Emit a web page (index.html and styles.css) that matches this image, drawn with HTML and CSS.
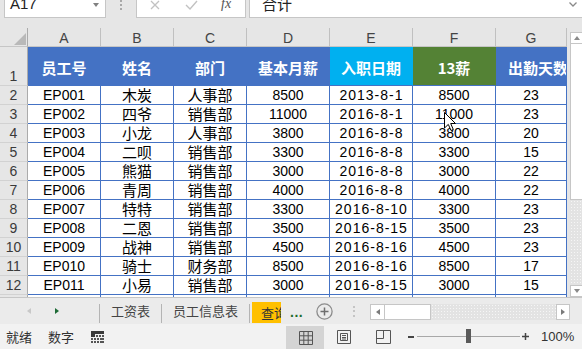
FILE: index.html
```html
<!DOCTYPE html>
<html lang="zh-CN">
<head>
<meta charset="utf-8">
<title>工资表</title>
<link rel="stylesheet" href="styles.css">
</head>
<body>
<div class="app">
  <div class="formula-bar">
    <div class="fb-box name-box"><span class="name-text">A17</span><span class="dd"></span></div>
    <div class="grip"></div>
    <div class="fb-box fx-box">
      <svg class="ic-x" width="10" height="10" viewBox="0 0 10 10"><path d="M1 1 L9 9 M9 1 L1 9" stroke="#c2c2c2" stroke-width="1.3" fill="none"/></svg>
      <svg class="ic-check" width="13" height="10" viewBox="0 0 13 10"><path d="M1 5 L5 9 L12 1" stroke="#c2c2c2" stroke-width="1.4" fill="none"/></svg>
      <span class="fx">fx</span>
    </div>
    <div class="fb-box formula-input"><span class="f-text">合计</span>
      <svg class="chev" width="8" height="5" viewBox="0 0 8 5"><path d="M0.5 0.5 L4 4 L7.5 0.5" stroke="#8a8a8a" stroke-width="1.3" fill="none"/></svg>
    </div>
  </div>

  <div class="sheet-wrap">
    <div class="sheet">
      <div class="corner"><span class="tri"></span></div>
      <div class="ch">A</div><div class="ch">B</div><div class="ch">C</div><div class="ch">D</div><div class="ch">E</div><div class="ch">F</div><div class="ch">G</div>

      <div class="rh rh1">1</div>
      <div class="hd">员工号</div><div class="hd">姓名</div><div class="hd">部门</div><div class="hd">基本月薪</div><div class="hd hd-cyan">入职日期</div><div class="hd hd-green">13薪</div><div class="hd hd-last">出勤天数</div>

      <div class="rh">2</div><div class="c">EP001</div><div class="c zh">木炭</div><div class="c zh">人事部</div><div class="c">8500</div><div class="c dt">2013-8-1</div><div class="c">8500</div><div class="c">23</div>
      <div class="rh">3</div><div class="c">EP002</div><div class="c zh">四爷</div><div class="c zh">销售部</div><div class="c">11000</div><div class="c dt">2016-8-1</div><div class="c">11000</div><div class="c">23</div>
      <div class="rh">4</div><div class="c">EP003</div><div class="c zh">小龙</div><div class="c zh">人事部</div><div class="c">3800</div><div class="c dt">2016-8-8</div><div class="c">3800</div><div class="c">20</div>
      <div class="rh">5</div><div class="c">EP004</div><div class="c zh">二呗</div><div class="c zh">销售部</div><div class="c">3300</div><div class="c dt">2016-8-8</div><div class="c">3300</div><div class="c">15</div>
      <div class="rh">6</div><div class="c">EP005</div><div class="c zh">熊猫</div><div class="c zh">销售部</div><div class="c">3000</div><div class="c dt">2016-8-8</div><div class="c">3000</div><div class="c">22</div>
      <div class="rh">7</div><div class="c">EP006</div><div class="c zh">青周</div><div class="c zh">销售部</div><div class="c">4000</div><div class="c dt">2016-8-8</div><div class="c">4000</div><div class="c">22</div>
      <div class="rh">8</div><div class="c">EP007</div><div class="c zh">特特</div><div class="c zh">销售部</div><div class="c">3300</div><div class="c dt">2016-8-10</div><div class="c">3300</div><div class="c">23</div>
      <div class="rh">9</div><div class="c">EP008</div><div class="c zh">二恩</div><div class="c zh">销售部</div><div class="c">3500</div><div class="c dt">2016-8-15</div><div class="c">3500</div><div class="c">23</div>
      <div class="rh">10</div><div class="c">EP009</div><div class="c zh">战神</div><div class="c zh">销售部</div><div class="c">4500</div><div class="c dt">2016-8-16</div><div class="c">4500</div><div class="c">23</div>
      <div class="rh">11</div><div class="c">EP010</div><div class="c zh">骑士</div><div class="c zh">财务部</div><div class="c">8500</div><div class="c dt">2016-8-16</div><div class="c">8500</div><div class="c">17</div>
      <div class="rh">12</div><div class="c">EP011</div><div class="c zh">小易</div><div class="c zh">销售部</div><div class="c">3000</div><div class="c dt">2016-8-15</div><div class="c">3000</div><div class="c">15</div>
      <div class="rh"></div><div class="c"></div><div class="c"></div><div class="c"></div><div class="c"></div><div class="c"></div><div class="c"></div><div class="c"></div>
    </div>

    <div class="vscroll">
      <div class="vs-btn"><span class="tri-up"></span></div>
      <div class="vs-thumb"></div>
      <div class="vs-track"></div>
      <div class="vs-btn"><span class="tri-down"></span></div>
    </div>

    <svg class="cursor" width="13" height="20" viewBox="0 0 13 20"><path d="M0.5 0.5 L0.5 16 L4.3 12.4 L7 18.5 L9.3 17.5 L6.7 11.5 L11.5 11.5 Z" fill="#fff" stroke="#000" stroke-width="1"/></svg>
  </div>

  <div class="tabbar">
    <div class="nav"><span class="tri-l"></span><span class="tri-r"></span></div>
    <span class="sep"></span>
    <span class="tab tab1">工资表</span>
    <span class="sep"></span>
    <span class="tab tab2">员工信息表</span>
    <span class="sep"></span>
    <span class="tab-active">查询</span>
    <span class="more">...</span>
    <svg class="add" width="17" height="17" viewBox="0 0 17 17"><circle cx="8.5" cy="8.5" r="7.6" fill="none" stroke="#8c8c8c" stroke-width="1.3"/><path d="M8.5 4.5 V12.5 M4.5 8.5 H12.5" stroke="#6e6e6e" stroke-width="1.5"/></svg>
    <span class="grip2"></span>
    <div class="hscroll">
      <div class="hs-btn"><span class="tri-hl"></span></div>
      <div class="hs-thumb"></div>
      <div class="hs-track"></div>
      <div class="hs-btn hs-right"><span class="tri-hr"></span></div>
    </div>
  </div>

  <div class="statusbar">
    <span class="st st1">就绪</span>
    <span class="st st2">数字</span>
    <svg class="macro" width="13" height="12" viewBox="0 0 13 12"><rect x="0" y="0" width="13" height="3" fill="#3a3a3a"/><rect x="0" y="0" width="4" height="6" fill="#3a3a3a"/><g fill="#555"><rect x="5" y="4" width="2" height="2"/><rect x="8" y="4" width="2" height="2"/><rect x="11" y="4" width="2" height="2"/><rect x="0" y="7" width="2" height="2"/><rect x="3" y="7" width="2" height="2"/><rect x="6" y="7" width="2" height="2"/><rect x="9" y="7" width="2" height="2"/><rect x="11" y="7" width="2" height="2"/><rect x="0" y="10" width="2" height="2"/><rect x="3" y="10" width="2" height="2"/><rect x="6" y="10" width="2" height="2"/><rect x="9" y="10" width="2" height="2"/><rect x="11" y="10" width="2" height="2"/></g></svg>
    <div class="view-normal">
      <svg width="14" height="14" viewBox="0 0 14 14"><path d="M0.5 0.5 H13.5 V13.5 H0.5 Z M0.5 4.8 H13.5 M0.5 9.2 H13.5 M4.8 0.5 V13.5 M9.2 0.5 V13.5" stroke="#555" stroke-width="1" fill="none"/></svg>
    </div>
    <svg class="view-layout" width="14" height="14" viewBox="0 0 14 14"><path d="M0.5 0.5 H13.5 V13.5 H0.5 Z M3.5 3.5 H10.5 V10.5 H3.5 Z M5 5.5 H9 M5 7.5 H9 M5 9 H9" stroke="#555" stroke-width="1" fill="none"/></svg>
    <svg class="view-break" width="15" height="14" viewBox="0 0 15 14"><path d="M0.5 0.5 H14.5 V13.5 H0.5 Z M7.5 0.5 V8.5 M0.5 8.5 H7.5" stroke="#555" stroke-width="1" fill="none"/></svg>
    <span class="zoom-minus"></span>
    <div class="slider"><span class="slider-thumb"></span></div>
    <svg class="zoom-plus" width="7" height="7" viewBox="0 0 7 7"><path d="M3.5 0 V7 M0 3.5 H7" stroke="#444" stroke-width="1.5"/></svg>
    <span class="zoom-val">100%</span>
  </div>
</div>
</body>
</html>
```

FILE: styles.css
```css
* { box-sizing: border-box; }

body {
  margin: 0;
  background: #e6e6e6;
  font-family: "Liberation Sans", "Noto Sans CJK SC", sans-serif;
  overflow: hidden;
}

.app {
  width: 582px;
  height: 349px;
  display: flex;
  flex-direction: column;
  overflow: hidden;
}

/* ---------- formula bar ---------- */
.formula-bar {
  flex: none;
  height: 18px;
  margin-bottom: 10px;
  display: flex;
  align-items: flex-start;
}

.fb-box {
  flex: none;
  margin-top: -6px;
  height: 24px;
  background: #fff;
  border: 1px solid #c6c6c6;
  display: flex;
  align-items: flex-start;
}

.name-box {
  margin-left: 4px;
  width: 102px;
  padding-left: 5px;
}

.name-text {
  font-size: 15px;
  line-height: 18px;
  color: #222;
}

.dd {
  width: 0;
  height: 0;
  border-left: 3.5px solid transparent;
  border-right: 3.5px solid transparent;
  border-top: 4px solid #808080;
  margin-left: auto;
  margin-right: 6px;
  margin-top: 8px;
}

.grip {
  flex: none;
  width: 2px;
  height: 12px;
  margin-left: 14px;
  background: repeating-linear-gradient(to bottom, #a8a8a8 0 2px, transparent 2px 4px);
}

.fx-box {
  margin-left: 14px;
  width: 110px;
  padding-left: 13px;
}

.ic-x { margin-top: 5px; }
.ic-check { margin-top: 5px; margin-left: 25px; }

.fx {
  margin-left: 23px;
  font-family: "Liberation Serif", serif;
  font-style: italic;
  font-size: 14px;
  line-height: 18px;
  color: #555;
}

.formula-input {
  margin-left: 3px;
  width: 340px;
  padding-left: 12px;
}

.f-text {
  font-family: "Noto Sans CJK SC", sans-serif;
  font-size: 15px;
  line-height: 18px;
  color: #222;
}

.chev {
  margin-left: auto;
  margin-right: 11px;
  margin-top: 7px;
}

/* ---------- sheet ---------- */
.sheet-wrap {
  flex: none;
  height: 269px;
  display: flex;
  position: relative;
}

.sheet {
  flex: none;
  width: 567px;
  height: 269px;
  overflow: hidden;
  display: grid;
  grid-template-columns: 28px 73px 73px 73px 83px 83px 83px 71px;
  grid-template-rows: 19px 39px repeat(12, 19px);
}

.corner {
  background: #e6e6e6;
  border-right: 1px solid #ababab;
  border-bottom: 1px solid #c6c6c6;
  display: flex;
  align-items: flex-end;
  justify-content: flex-end;
  padding: 0 1px 1px 0;
}

.tri {
  width: 0;
  height: 0;
  border-left: 12px solid transparent;
  border-bottom: 12px solid #b9b9b9;
}

.ch {
  background: #e6e6e6;
  border-right: 1px solid #c0c0c0;
  border-bottom: 1px solid #c6c6c6;
  display: flex;
  align-items: center;
  justify-content: center;
  padding-top: 2px;
  font-size: 14px;
  line-height: 16px;
  color: #444;
}

.rh {
  background: #e6e6e6;
  border-right: 1px solid #ababab;
  border-bottom: 1px solid #d2d2d2;
  display: flex;
  align-items: center;
  justify-content: center;
  font-size: 14px;
  line-height: 16px;
  color: #3a3a3a;
}

.rh1 {
  align-items: flex-end;
  padding-bottom: 1px;
}

.hd {
  background: #4472c4;
  border-right: 1px solid #4472c4;
  border-bottom: 1px solid #4472c4;
  color: #fff;
  font-family: "Noto Sans CJK SC", sans-serif;
  font-weight: 700;
  font-size: 15px;
  line-height: 18px;
  display: flex;
  align-items: center;
  justify-content: center;
  padding-top: 4px;
  white-space: nowrap;
  overflow: hidden;
}

.hd-cyan { background: #00b0f0; border-right-color: #00b0f0; }
.hd-green { background: #548235; border-right-color: #548235; }
.hd-last { justify-content: flex-start; padding-left: 12px; }

.c {
  background: #fff;
  border-right: 1px solid #4472c4;
  border-bottom: 1px solid #4472c4;
  display: flex;
  align-items: center;
  justify-content: center;
  font-size: 14px;
  line-height: 18px;
  color: #000;
  white-space: nowrap;
}

.zh {
  font-family: "Noto Sans CJK SC", sans-serif;
  font-size: 15px;
}

.dt { letter-spacing: 1px; padding-left: 1px; }

.cursor {
  position: absolute;
  left: 444px;
  top: 84px;
}

/* vertical scrollbar */
.vscroll {
  flex: none;
  width: 13px;
  margin-left: 3px;
  padding-top: 4px;
  display: flex;
  flex-direction: column;
}

.vs-btn {
  flex: none;
  height: 12px;
  background: #fff;
  border: 1px solid #c6c6c6;
  display: flex;
  align-items: center;
  justify-content: center;
}

.tri-up {
  width: 0; height: 0;
  border-left: 3.5px solid transparent;
  border-right: 3.5px solid transparent;
  border-bottom: 4px solid #8a8a8a;
}

.tri-down {
  width: 0; height: 0;
  border-left: 3.5px solid transparent;
  border-right: 3.5px solid transparent;
  border-top: 4px solid #8a8a8a;
}

.vs-thumb {
  flex: none;
  height: 156px;
  background: #fff;
  border: 1px solid #c6c6c6;
  border-top: 0;
}

.vs-track {
  flex: 1;
  background: #e3e3e3 radial-gradient(circle, #f6f6f6 0.7px, transparent 0.9px) 0 0 / 3px 3px;
}

/* ---------- tab bar ---------- */
.tabbar {
  flex: none;
  height: 27px;
  border-top: 1px solid #c6c6c6;
  background: #ebebeb;
  display: flex;
  align-items: center;
  font-family: "Noto Sans CJK SC", sans-serif;
  font-size: 13px;
  color: #444;
}

.nav {
  flex: none;
  width: 99px;
  display: flex;
  align-items: center;
}

.tri-l {
  margin-left: 27px;
  width: 0; height: 0;
  border-top: 3.5px solid transparent;
  border-bottom: 3.5px solid transparent;
  border-right: 4px solid #c8c8c8;
}

.tri-r {
  margin-left: 24px;
  width: 0; height: 0;
  border-top: 3.5px solid transparent;
  border-bottom: 3.5px solid transparent;
  border-left: 4px solid #1d6a35;
}

.sep {
  flex: none;
  width: 1px;
  height: 19px;
  background: #b4b4b4;
  margin-top: 4px;
}

.tab {
  flex: none;
  line-height: 18px;
}

.tab1 { margin: 0 11px; }
.tab2 { margin: 0 11px 0 11px; }

.tab-active {
  flex: none;
  align-self: flex-start;
  margin-top: 4px;
  margin-left: 2px;
  width: 29px;
  height: 21px;
  background: #ffc000;
  padding-left: 9px;
  line-height: 21px;
  white-space: nowrap;
  overflow: hidden;
  color: #333;
}

.more {
  flex: none;
  margin-left: 9px;
  font-family: "Liberation Sans", sans-serif;
  font-weight: 700;
  font-size: 14px;
  color: #1e6b2c;
  letter-spacing: 0.5px;
  line-height: 14px;
  margin-top: 2px;
}

.add {
  flex: none;
  margin-left: 13px;
  margin-top: 1px;
}

.grip2 {
  flex: none;
  width: 2px;
  height: 11px;
  margin-left: 20px;
  background: repeating-linear-gradient(to bottom, #c4c4c4 0 2px, transparent 2px 4.5px);
}

.hscroll {
  flex: none;
  margin-left: 15px;
  width: 200px;
  height: 16px;
  display: flex;
  margin-top: 2px;
}

.hs-btn {
  flex: none;
  width: 15px;
  background: #fff;
  border: 1px solid #c6c6c6;
  display: flex;
  align-items: center;
  justify-content: center;
}

.tri-hl {
  width: 0; height: 0;
  border-top: 3.5px solid transparent;
  border-bottom: 3.5px solid transparent;
  border-right: 4px solid #7a7a7a;
}

.tri-hr {
  width: 0; height: 0;
  border-top: 3.5px solid transparent;
  border-bottom: 3.5px solid transparent;
  border-left: 4px solid #7a7a7a;
}

.hs-thumb {
  flex: none;
  width: 46px;
  background: #fff;
  border: 1px solid #c6c6c6;
  border-left: 0;
}

.hs-track {
  flex: 1;
  background: #e3e3e3 radial-gradient(circle, #f6f6f6 0.7px, transparent 0.9px) 0 0 / 3px 3px;
}

.hs-right { width: 14px; }

/* ---------- status bar ---------- */
.statusbar {
  flex: 1;
  background: #f2f2f2;
  display: flex;
  align-items: center;
  font-family: "Noto Sans CJK SC", sans-serif;
  font-size: 13px;
  color: #333;
}

.st { flex: none; line-height: 18px; }
.st1 { margin-left: 6px; }
.st2 { margin-left: 16px; }

.macro { flex: none; margin-left: 17px; }

.view-normal {
  flex: none;
  align-self: stretch;
  margin-top: 2px;
  margin-left: 182px;
  width: 38px;
  background: #d4d4d4;
  display: flex;
  align-items: center;
  padding-left: 13px;
}

.view-layout { flex: none; margin-left: 13px; }
.view-break { flex: none; margin-left: 25px; }

.zoom-minus {
  flex: none;
  margin-left: 17px;
  width: 6px;
  height: 2px;
  background: #444;
}

.slider {
  flex: none;
  position: relative;
  margin-left: 3px;
  width: 103px;
  height: 1px;
  background: #a8a8a8;
}

.slider-thumb {
  position: absolute;
  left: 49px;
  top: -7px;
  width: 5px;
  height: 14px;
  background: #5a5a5a;
}

.zoom-plus { flex: none; margin-left: 2px; }

.zoom-val {
  flex: none;
  margin-left: 12px;
  font-family: "Liberation Sans", sans-serif;
  font-size: 13px;
  color: #333;
}
```
